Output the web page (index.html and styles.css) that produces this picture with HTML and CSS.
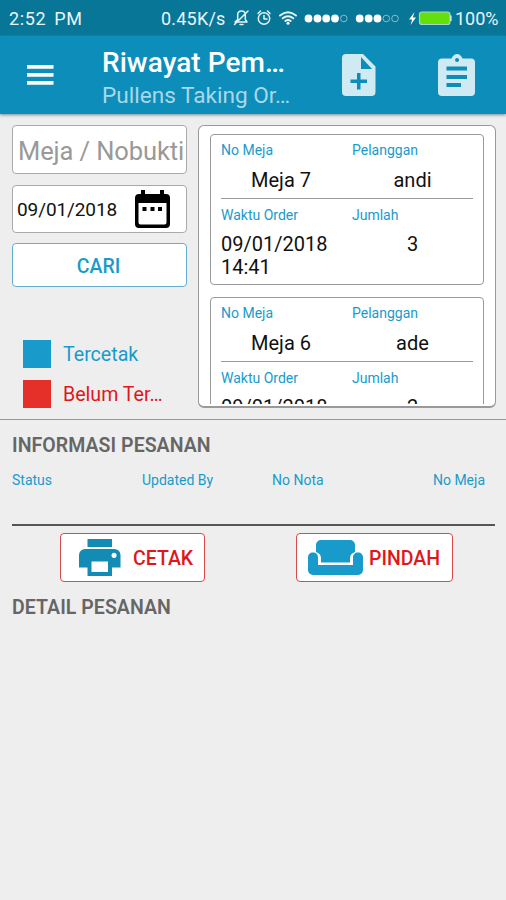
FILE: index.html
```html
<!DOCTYPE html>
<html lang="id">
<head>
<meta charset="utf-8">
<title>Riwayat Pemesanan</title>
<link rel="stylesheet" href="styles.css">
</head>
<body>
<div class="status-bar">
  <span class="clock">2:52 PM</span>
  <span class="speed">0.45K/s</span>
  <svg class="indicators" width="224" height="36" viewBox="230 0 224 36">
    <g fill="none" stroke="#e4f3f8" stroke-width="1.5" stroke-linecap="round" stroke-linejoin="round">
      <path d="M235 22h12l-1.700-2.500v-4.700c0-5-7.600-5-7.600 0v4.700L235 22M234.500 24.500 248 11M240 24.500h3"/>
      <circle cx="264" cy="18.500" r="5.700"/>
      <path d="M264 15.500v3.500h3M258 13.500l2.500-2.500M270 13.500l-2.500-2.500"/>
      <path stroke-width="2" d="M280 15.500q8-6.500 16 0M282.700 18.300q5.300-4.200 10.600 0M285.300 21q2.700-2 5.400 0"/>
    </g>
    <g fill="#fff">
      <circle cx="288" cy="23.300" r="1.500"/>
      <circle cx="308.500" cy="18.500" r="3.900"/><circle cx="317.500" cy="18.500" r="3.900"/><circle cx="326.200" cy="18.500" r="3.900"/><circle cx="335" cy="18.500" r="3.900"/>
      <circle cx="359.700" cy="18.500" r="3.900"/><circle cx="368.700" cy="18.500" r="3.900"/><circle cx="377.500" cy="18.500" r="3.900"/>
      <path d="m414.500 12-5.500 7.500h3.200l-1.700 5.500 5.500-7.500h-3.200z"/>
      <path d="M450 15.500h1.500v5.500H450z"/>
    </g>
    <g fill="none" stroke="#83bdd0" stroke-width="1"><circle cx="343.800" cy="18.500" r="3.300"/><circle cx="386.300" cy="18.500" r="3.300"/><circle cx="395" cy="18.500" r="3.300"/></g>
    <rect x="419.500" y="12" width="30.500" height="12.500" rx="2.500" fill="#63e00c" stroke="#a5d5d2" stroke-width="1.200"/>
  </svg>
  <span class="percent">100%</span>
</div>
<header class="toolbar">
  <svg class="menu" width="27" height="20" viewBox="0 0 27 20"><path fill="#fff" d="M0 0h26.500v3.700H0zM0 8h26.500v3.700H0zM0 16h26.500v3.700H0z"/></svg>
  <div class="titles">
    <h1>Riwayat Pem…</h1>
    <p>Pullens Taking Or…</p>
  </div>
  <svg class="add-note" width="34" height="42" viewBox="0 0 34 42"><path fill="#d0eaf3" fill-rule="evenodd" d="M4 0h17l12.500 12.500V38a4 4 0 0 1-4 4H4a4 4 0 0 1-4-4V4a4 4 0 0 1 4-4zM19 3v12h11zM15 19v6.500H8.500v3.500H15v6.500h3.500V29H25v-3.500h-6.500V19z"/></svg>
  <svg class="clipboard" width="38" height="42" viewBox="0 0 38 42"><path fill="#d0eaf3" fill-rule="evenodd" d="M4 4.500h9.500C15 1.500 16.500 0 19 0s4 1.500 5.500 4.500H33a4 4 0 0 1 4 4V38a4 4 0 0 1-4 4H4a4 4 0 0 1-4-4V8.500a4 4 0 0 1 4-4zM19 4a2 2 0 1 0 .1 0zM8.500 12.500v4H29v-4zM8.500 21v4H29v-4zM8.500 29v4h14.500v-4z"/></svg>
</header>
<main>
  <section class="overview">
    <div class="filters">
      <div class="field search">Meja / Nobukti</div>
      <div class="field date"><span>09/01/2018</span>
        <svg width="35" height="38" viewBox="0 0 35 38"><path fill-rule="evenodd" d="M6 0h4v4h15V0h4v4h2a4 4 0 0 1 4 4v26a4 4 0 0 1-4 4H4a4 4 0 0 1-4-4V8a4 4 0 0 1 4-4h2zM3.500 13v19.500a2 2 0 0 0 2 2h24a2 2 0 0 0 2-2V13zM7.500 17h4v4h-4zM15.500 17h4v4h-4zM23 17h4v4h-4z"/></svg>
      </div>
      <button class="field cari"><span>CARI</span></button>
      <ul class="legend">
        <li class="printed"><i></i><span>Tercetak</span></li>
        <li class="pending"><i></i><span>Belum Ter…</span></li>
      </ul>
    </div>
    <div class="orders">
      <div class="list">
      <article class="order">
        <div class="pair top"><div><h3>No Meja</h3><p class="center">Meja 7</p></div><div><h3>Pelanggan</h3><p class="center">andi</p></div></div>
        <div class="pair"><div><h3>Waktu Order</h3><p>09/01/2018 14:41</p></div><div><h3>Jumlah</h3><p class="center">3</p></div></div>
      </article>
      <article class="order">
        <div class="pair top"><div><h3>No Meja</h3><p class="center">Meja 6</p></div><div><h3>Pelanggan</h3><p class="center">ade</p></div></div>
        <div class="pair"><div><h3>Waktu Order</h3><p>09/01/2018</p></div><div><h3>Jumlah</h3><p class="center">2</p></div></div>
      </article>
      </div>
    </div>
  </section>
  <section class="info">
    <h2>INFORMASI PESANAN</h2>
    <div class="columns"><span>Status</span><span>Updated By</span><span>No Nota</span><span>No Meja</span></div>
    <div class="actions">
      <button class="action print">
        <svg width="42" height="38" viewBox="0 0 42 38"><path fill="#128bb5" fill-rule="evenodd" d="M8.500 0H33v8H8.500zM6 10h29.500a6 6 0 0 1 6 6v12.500H33V37H8.500v-8.500H0V16a6 6 0 0 1 6-6zM12.500 22.500V33H29V22.500zM35 13.800a2.600 2.600 0 1 0 .1 0z"/></svg>
        <span>CETAK</span>
      </button>
      <button class="action move">
        <svg width="55" height="35" viewBox="0 0 55 35"><path fill="#189bcb" d="M13 0h29a5 5 0 0 1 5 5v7c-3 1-5 3-5 6v4.500H13V18c0-3-2-5-5-6V5a5 5 0 0 1 5-5z"/><path fill="#189bcb" d="M5 12.500c3 0 5 2 5 5V25h35v-7.500c0-3 2-5 5-5s5 2 5 5V30a5 5 0 0 1-5 5H5a5 5 0 0 1-5-5V17.500c0-3 2-5 5-5z"/></svg>
        <span>PINDAH</span>
      </button>
    </div>
    <h2 class="detail">DETAIL PESANAN</h2>
  </section>
</main>
</body>
</html>
```
FILE: styles.css
```css
* { box-sizing: border-box; }
body { margin: 0; width: 506px; height: 900px; overflow: hidden; background: #eee; color: #111; font-family: Roboto, "Liberation Sans", sans-serif; white-space: nowrap; }
h1, h2, h3, p, ul { margin: 0; padding: 0; font-weight: 400; list-style: none; }
svg { display: block; flex: none; }
button { font-family: inherit; }

.status-bar { height: 36px; display: flex; background: #087697; color: #e8f5f9; font-size: 18px; line-height: 38px; padding-left: 9px; }
.clock { width: 152px; word-spacing: 3px; letter-spacing: .6px; }
.speed { width: 69px; letter-spacing: .2px; }
.percent { padding-left: 1px; }

.toolbar { height: 78px; display: flex; background: #0d8dba; box-shadow: 0 1px 3px #6d8ba0; padding-left: 27px; position: relative; }
.menu { margin-top: 29px; }
.titles { margin: 8px 0 0 48px; width: 240px; }
.titles h1 { color: #fff; font-size: 28px; font-weight: 500; line-height: 37px; letter-spacing: .05px; }
.titles p { color: #a9d8e8; font-size: 22.600px; line-height: 29px; }
.add-note { margin-top: 18px; }
.clipboard { margin: 18px 0 0 62px; }

.overview { height: 306px; padding: 11px 10px 0 12px; display: flex; gap: 11px; border-bottom: 1px solid #999; }
.filters { width: 175px; }
.field { width: 175px; background: #fff; border: 1px solid #aaa; border-radius: 4px; display: flex; align-items: center; }
.search { height: 49px; padding-left: 5px; font-size: 25.500px; color: #999; letter-spacing: -.1px; padding-top: 2px; }
.date { height: 48px; margin-top: 11px; padding-left: 4px; font-size: 19px; letter-spacing: -.1px; }
.date span { width: 118px; }
.cari { height: 44px; margin-top: 10px; justify-content: center; border-color: #65add0; color: #189bcb; font-size: 19.500px; font-weight: 500; padding: 2px 8px 0 6px; }
.legend { padding: 53px 0 0 11px; }
.legend li { height: 28px; display: flex; align-items: center; gap: 12px; font-size: 19.600px; line-height: 30px; margin-bottom: 12px; }
.legend span { padding-top: 2px; }
.legend i { width: 28px; height: 28px; }
.printed { color: #189bcb; }
.printed i { background: #189bcb; }
.pending { color: #df171b; }
.pending i { background: #e52f29; }

.orders { width: 298px; height: 283px; background: #fff; border: 1px solid #999; border-radius: 6px; padding: 8px 11px 0; border-bottom-width: 2px; }
.list { height: 270px; overflow: hidden; }
.order { height: 151px; border: 1px solid #999; border-radius: 4px; padding: 6px 10px 0; margin-bottom: 12px; }
.pair { display: grid; grid-template-columns: 120px 121px; column-gap: 11px; }
.top { height: 58px; border-bottom: 1px solid #999; margin-bottom: 7px; }
.order h3 { color: #189bcb; font-size: 14px; line-height: 18px; }
.order p { font-size: 20px; line-height: 23px; margin-top: 9px; white-space: normal; }
.order .top p { margin-top: 10px; }
.order .center { text-align: center; }

.info { padding: 0 11px 0 12px; }
.info h2 { color: #666; font-size: 19.500px; font-weight: 600; line-height: 26px; padding-top: 13px; letter-spacing: .05px; }
.columns { height: 67px; padding: 12px 10px 0 0; border-bottom: 2px solid #555; display: grid; grid-template-columns: 130px 130px 1fr auto; color: #189bcb; font-size: 14px; line-height: 18px; }
.actions { display: flex; gap: 91px; padding: 7px 0 0 48px; }
.action { height: 49px; background: #fff; border: 1px solid #d94a4a; border-radius: 4px; padding: 0; display: flex; align-items: center; color: #df171b; font-size: 19.500px; font-weight: 500; }
.action span { padding-top: 2px; }
.print { width: 145px; padding-left: 18px; gap: 12px; }
.move { width: 157px; padding-left: 11px; gap: 6px; }
.info .detail { padding-top: 13px; }
```
